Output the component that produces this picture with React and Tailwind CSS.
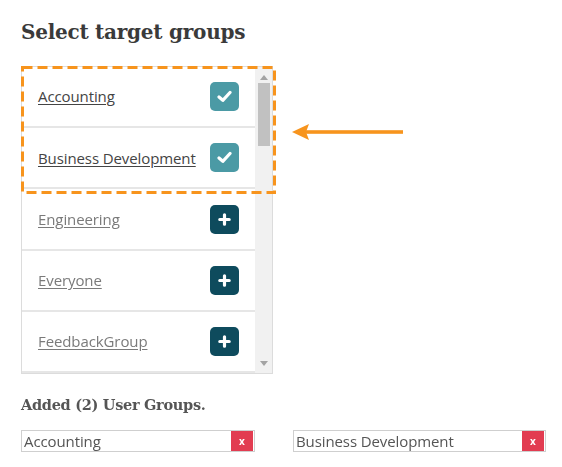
import React from 'react';

const GROUPS = [
  { name: 'Accounting', added: true },
  { name: 'Business Development', added: true },
  { name: 'Engineering', added: false },
  { name: 'Everyone', added: false },
  { name: 'FeedbackGroup', added: false },
];

function CheckIcon() {
  return (
    <svg width="15" height="13" viewBox="0 0 15 13" fill="none">
      <path d="M2 7 L5.8 10.3 L13 2.5" stroke="white" strokeWidth="3.2" strokeLinecap="round" strokeLinejoin="round" />
    </svg>
  );
}

function PlusIcon() {
  return (
    <svg width="13" height="13" viewBox="0 0 13 13" fill="none">
      <path d="M6.5 1.8 V11.2 M1.8 6.5 H11.2" stroke="white" strokeWidth="3.2" strokeLinecap="round" />
    </svg>
  );
}

function GroupRow({ group }) {
  return (
    <div
      className={`flex h-[61.5px] items-center justify-between border-b-2 border-[#e6e6e6] bg-white pl-4 pr-4 ${
        group.added ? '' : 'blur-[0.7px]'
      }`}
    >
      <span
        className={`text-[15px] tracking-[-0.1px] underline underline-offset-2 ${
          group.added ? 'text-[#444]' : 'text-[#7a7a7a]'
        }`}
      >
        {group.name}
      </span>
      <span
        className={`flex h-[29px] w-[29px] items-center justify-center rounded-[5px] ${
          group.added ? 'bg-[#4b9aa5]' : 'bg-[#0e4b5d]'
        }`}
      >
        {group.added ? <CheckIcon /> : <PlusIcon />}
      </span>
    </div>
  );
}

function Tag({ name, width }) {
  return (
    <div
      className="flex h-[22px] items-center justify-between border border-[#cfcfcf] bg-white pl-[2px] pr-px"
      style={{ width }}
    >
      <span className="text-[15px] leading-none tracking-[-0.1px] text-[#555]">{name}</span>
      <span className="flex h-[20px] w-[22px] items-center justify-center bg-[#e23c51] text-[10px] font-bold leading-none text-white">
        x
      </span>
    </div>
  );
}

export default function App() {
  return (
    <div className="min-h-[467px] w-[562px] bg-white pl-[21px] pt-[17px] font-['Open_Sans',sans-serif]">
      <h1 className="font-['DejaVu_Serif',serif] text-[20px] font-bold leading-[30px] tracking-[-0.25px] text-[#3a3a3a]">
        Select target groups
      </h1>

      <div className="mt-[19px] flex items-start">
        <div className="relative">
          <div className="flex h-[308px] w-[252px] overflow-hidden border border-[#dcdcdc] bg-[#f0f0f0]">
            <div className="flex w-[233px] flex-col">
              {GROUPS.map((g) => (
                <GroupRow key={g.name} group={g} />
              ))}
            </div>
            <div className="relative flex w-[17px] flex-col items-center bg-[#f1f1f1]">
              <svg className="mt-[8px]" width="8" height="5" viewBox="0 0 8 5">
                <path d="M0 5 L4 0 L8 5 Z" fill="#a3a3a3" />
              </svg>
              <div className="mt-[3px] h-[63px] w-[12px] bg-[#c1c1c1]" />
              <svg className="mt-auto mb-[7px]" width="8" height="5" viewBox="0 0 8 5">
                <path d="M0 0 L4 5 L8 0 Z" fill="#a3a3a3" />
              </svg>
            </div>
          </div>
          {/* highlight around the selected groups */}
          <svg
            className="pointer-events-none absolute left-0 top-0"
            width="255"
            height="128"
            viewBox="0 0 255 128"
          >
            <rect
              x="1.5"
              y="1.5"
              width="252"
              height="125"
              fill="none"
              stroke="#f7941d"
              strokeWidth="3"
              strokeDasharray="10 5"
            />
          </svg>
        </div>

        <svg className="ml-[19px] mt-[57px]" width="111" height="18" viewBox="0 0 111 18">
          <path d="M0 9 L17 1 L14 9 L17 17 Z" fill="#f7941d" />
          <rect x="13" y="7.2" width="98" height="3.6" fill="#f7941d" />
        </svg>
      </div>

      <div className="blur-[0.5px]">
        <h2 className="mt-[20px] font-['DejaVu_Serif',serif] text-[14.5px] font-bold leading-[22px] tracking-[-0.3px] text-[#555]">
          Added (2) User Groups.
        </h2>
        <div className="mt-[14px] flex gap-[38px]">
          <Tag name="Accounting" width={234} />
          <Tag name="Business Development" width={253} />
        </div>
      </div>
    </div>
  );
}
